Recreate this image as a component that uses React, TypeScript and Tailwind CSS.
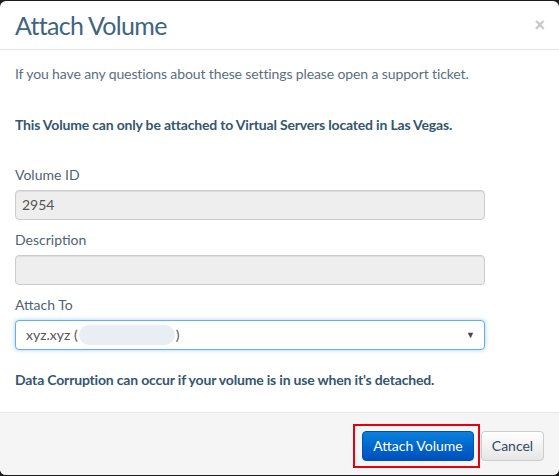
import React from "react";

export default function App() {
  const font = { fontFamily: '"Lato", "Liberation Sans", sans-serif' };
  return (
    <div className="h-[476px] w-[559px] bg-[#1c1c1c] pt-px" style={font}>
      <div className="relative flex h-[474px] flex-col overflow-hidden rounded-[6px] bg-white">
        <div className="flex h-[49px] shrink-0 items-center justify-between border-b border-[#e5e5e5] pl-[15px] pr-[14px]">
          <h1 className="text-[25px] leading-none tracking-[-0.7px] text-[#3e6580]">Attach Volume</h1>
          <span className="text-[18px] font-bold leading-none text-[#c8c8c8]" style={{ fontFamily: '"Liberation Sans", sans-serif' }}>×</span>
        </div>
        <div className="flex flex-col px-[15px] pt-[14px] text-[14px] leading-[20px]">
          <p className="tracking-[-0.12px] text-[#5a6f80]">If you have any questions about these settings please open a support ticket.</p>
          <p className="mt-[31px] font-bold tracking-[-0.18px] text-[#34566e]">This Volume can only be attached to Virtual Servers located in Las Vegas.</p>
          <label className="mt-[30px] text-[#4f6273]">Volume ID</label>
          <div className="mt-[5px] flex h-[30px] w-[470px] items-center rounded-[4px] border border-[#cccccc] bg-[#eeeeee] px-[6px] text-[#555555] shadow-[inset_0_1px_1px_rgba(0,0,0,0.075)]">2954</div>
          <label className="mt-[10px] text-[#4f6273]">Description</label>
          <div className="mt-[5px] h-[30px] w-[470px] rounded-[4px] border border-[#cccccc] bg-[#eeeeee] shadow-[inset_0_1px_1px_rgba(0,0,0,0.075)]"></div>
          <label className="mt-[10px] text-[#4f6273]">Attach To</label>
          <div className="mt-[5px] flex h-[30px] w-[470px] items-center rounded-[4px] border border-[#66afe9] bg-white pl-[10px] pr-[9px] text-[#555555] shadow-[0_0_4px_rgba(102,175,233,0.6)]">
            <span>xyz.xyz (</span>
            <span className="mx-[1px] h-[20px] w-[96px] rounded-full bg-[#e9eef4]"></span>
            <span>)</span>
            <span className="ml-auto text-[9px] text-[#444]">▼</span>
          </div>
          <p className="mt-[20px] font-bold tracking-[-0.18px] text-[#34566e]">Data Corruption can occur if your volume is in use when it's detached.</p>
        </div>
        <div className="mt-auto flex h-[63px] items-center justify-end gap-[7px] border-t border-[#e5e5e5] bg-[#f5f5f5] pr-[15px] pt-[3px]">
          <div className="relative">
            <button className="h-[30px] w-[112px] rounded-[4px] border border-[#0050b8] bg-gradient-to-b from-[#0b80dc] to-[#004fbd] text-[14px] text-white">Attach Volume</button>
            <div className="absolute left-[-9px] top-[-7px] h-[44px] w-[127px] border-2 border-[#e3000f]"></div>
          </div>
          <button className="h-[30px] w-[63px] rounded-[4px] border border-[#cccccc] bg-gradient-to-b from-white to-[#e6e6e6] text-[14px] text-[#34495e]">Cancel</button>
        </div>
      </div>
    </div>
  );
}
